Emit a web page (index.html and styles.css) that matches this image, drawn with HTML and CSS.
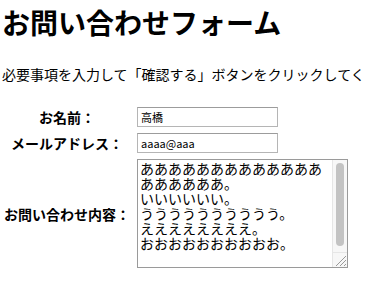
FILE: index.html
```html
<!DOCTYPE html>
<html lang="ja">
<head>
    <meta charset="UTF-8">
    <title>お問い合わせフォーム</title>
    <link rel="stylesheet" href="styles.css">
</head>
<body>
    <h1>お問い合わせフォーム</h1>
    <p class="lead">必要事項を入力して「確認する」ボタンをクリックしてください。</p>
    <form class="contact">
        <table>
            <tr>
                <th>お名前：</th>
                <td><input type="text" name="name" value="高橋"></td>
            </tr>
            <tr>
                <th>メールアドレス：</th>
                <td><input type="text" name="mail" value="aaaa@aaa"></td>
            </tr>
            <tr>
                <th>お問い合わせ内容：</th>
                <td>
                    <div class="memo">
                        <textarea name="body">あああああああああああああああああああ。
いいいいいい。
うううううううううう。
ええええええええ。
おおおおおおおおおお。</textarea>
                        <!-- scrollbar drawn by hand, the browser hides its own -->
                        <div class="scroll">
                            <div class="track"><span class="thumb"></span></div>
                            <div class="grip">
                                <svg width="14" height="14" viewBox="0 0 14 14">
                                    <path d="M3 13L13 3M7 13L13 7M11 13L13 11" stroke="#9a9a9a" stroke-width="1"/>
                                </svg>
                            </div>
                        </div>
                    </div>
                </td>
            </tr>
        </table>
    </form>
</body>
</html>
```

FILE: styles.css
```css
body {
    margin: 0;
    padding: 0 2px;
    font-family: "Noto Sans CJK JP", "Noto Sans", sans-serif;
    font-size: 14px;
    color: #000;
    background: #fff;
}
h1 {
    font-size: 28px;
    line-height: 34px;
    margin: 5px 0 0;
}
.lead {
    margin: 25px 0 20px;
    white-space: nowrap;
    overflow: hidden;
}
table {
    border-spacing: 0;
}
th {
    font-weight: bold;
    text-align: center;
    padding: 3px 4px 3px 2px;
    white-space: nowrap;
}
td {
    padding: 3px 3px;
}
input {
    width: 141px;
    height: 20px;
    box-sizing: border-box;
    border: 1px solid #b5b5b5;
    border-top-color: #9c9c9c;
    padding: 1px 3px;
    font-family: "Noto Sans CJK JP", sans-serif;
    font-size: 11px;
    margin: 0;
    display: block;
}
.memo {
    position: relative;
    width: 211px;
    height: 109px;
}
textarea {
    display: block;
    width: 211px;
    height: 109px;
    box-sizing: border-box;
    margin: 0;
    padding: 1px 17px 1px 2px;
    border: 1px solid #9a9a9a;
    font-family: "Noto Sans CJK JP", sans-serif;
    font-size: 14px;
    line-height: 15px;
    resize: none;
    overflow: hidden;
}
.scroll {
    position: absolute;
    top: 1px;
    right: 1px;
    bottom: 1px;
    width: 15px;
    display: flex;
    flex-direction: column;
    background: #f7f7f7;
    border-left: 1px solid #e6e6e6;
    box-sizing: border-box;
}
.track {
    flex: 1;
    display: flex;
    padding: 3px 3px 6px 3px;
}
.thumb {
    flex: 1;
    background: #c3c3c3;
    border-radius: 4px;
}
.grip {
    height: 15px;
    border-top: 1px solid #e6e6e6;
    box-sizing: border-box;
}
.grip svg {
    display: block;
}
```
